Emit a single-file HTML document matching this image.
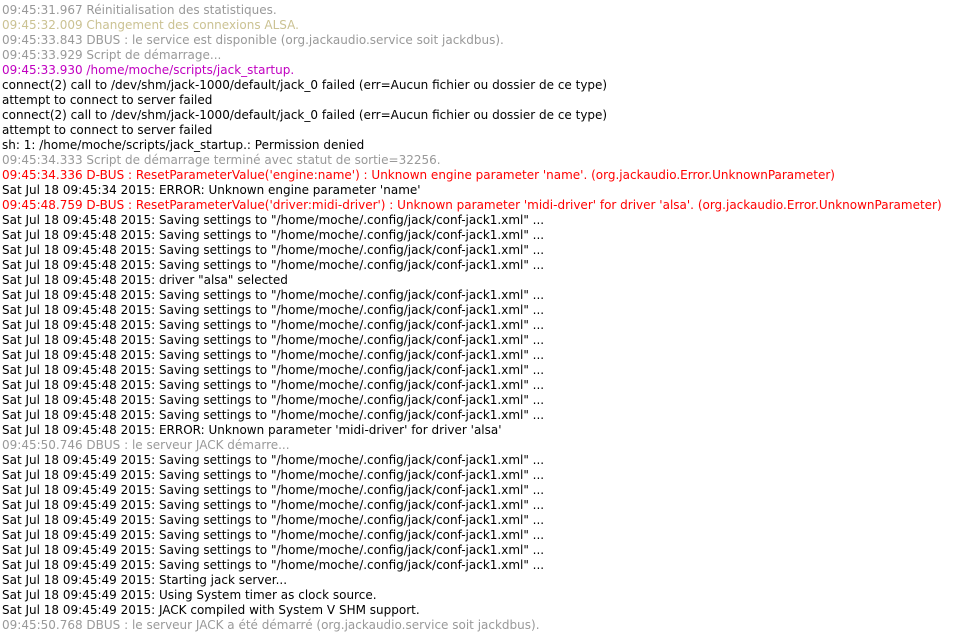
<!DOCTYPE html>
<html><head><meta charset="utf-8"><style>
body{margin:0;background:#fff;width:963px;height:632px;overflow:hidden}
#l{position:absolute;left:2px;top:3px;font-family:"DejaVu Sans",sans-serif;font-size:12px;line-height:15px;color:#000;white-space:pre}
.g{color:#999}.y{color:#cbc293}.p{color:#c000c0}.r{color:#f00}
</style></head><body><div id="l"><div class="g">09:45:31.967 Réinitialisation des statistiques.</div><div class="y">09:45:32.009 Changement des connexions ALSA.</div><div class="g">09:45:33.843 DBUS : le service est disponible (org.jackaudio.service soit jackdbus).</div><div class="g">09:45:33.929 Script de démarrage...</div><div class="p">09:45:33.930 /home/moche/scripts/jack_startup.</div><div>connect(2) call to /dev/shm/jack-1000/default/jack_0 failed (err=Aucun fichier ou dossier de ce type)</div><div>attempt to connect to server failed</div><div>connect(2) call to /dev/shm/jack-1000/default/jack_0 failed (err=Aucun fichier ou dossier de ce type)</div><div>attempt to connect to server failed</div><div>sh: 1: /home/moche/scripts/jack_startup.: Permission denied</div><div class="g">09:45:34.333 Script de démarrage terminé avec statut de sortie=32256.</div><div class="r">09:45:34.336 D-BUS : ResetParameterValue('engine:name') : Unknown engine parameter 'name'. (org.jackaudio.Error.UnknownParameter)</div><div>Sat Jul 18 09:45:34 2015: ERROR: Unknown engine parameter 'name'</div><div class="r">09:45:48.759 D-BUS : ResetParameterValue('driver:midi-driver') : Unknown parameter 'midi-driver' for driver 'alsa'. (org.jackaudio.Error.UnknownParameter)</div><div>Sat Jul 18 09:45:48 2015: Saving settings to "/home/moche/.config/jack/conf-jack1.xml" ...</div><div>Sat Jul 18 09:45:48 2015: Saving settings to "/home/moche/.config/jack/conf-jack1.xml" ...</div><div>Sat Jul 18 09:45:48 2015: Saving settings to "/home/moche/.config/jack/conf-jack1.xml" ...</div><div>Sat Jul 18 09:45:48 2015: Saving settings to "/home/moche/.config/jack/conf-jack1.xml" ...</div><div>Sat Jul 18 09:45:48 2015: driver "alsa" selected</div><div>Sat Jul 18 09:45:48 2015: Saving settings to "/home/moche/.config/jack/conf-jack1.xml" ...</div><div>Sat Jul 18 09:45:48 2015: Saving settings to "/home/moche/.config/jack/conf-jack1.xml" ...</div><div>Sat Jul 18 09:45:48 2015: Saving settings to "/home/moche/.config/jack/conf-jack1.xml" ...</div><div>Sat Jul 18 09:45:48 2015: Saving settings to "/home/moche/.config/jack/conf-jack1.xml" ...</div><div>Sat Jul 18 09:45:48 2015: Saving settings to "/home/moche/.config/jack/conf-jack1.xml" ...</div><div>Sat Jul 18 09:45:48 2015: Saving settings to "/home/moche/.config/jack/conf-jack1.xml" ...</div><div>Sat Jul 18 09:45:48 2015: Saving settings to "/home/moche/.config/jack/conf-jack1.xml" ...</div><div>Sat Jul 18 09:45:48 2015: Saving settings to "/home/moche/.config/jack/conf-jack1.xml" ...</div><div>Sat Jul 18 09:45:48 2015: Saving settings to "/home/moche/.config/jack/conf-jack1.xml" ...</div><div>Sat Jul 18 09:45:48 2015: ERROR: Unknown parameter 'midi-driver' for driver 'alsa'</div><div class="g">09:45:50.746 DBUS : le serveur JACK démarre...</div><div>Sat Jul 18 09:45:49 2015: Saving settings to "/home/moche/.config/jack/conf-jack1.xml" ...</div><div>Sat Jul 18 09:45:49 2015: Saving settings to "/home/moche/.config/jack/conf-jack1.xml" ...</div><div>Sat Jul 18 09:45:49 2015: Saving settings to "/home/moche/.config/jack/conf-jack1.xml" ...</div><div>Sat Jul 18 09:45:49 2015: Saving settings to "/home/moche/.config/jack/conf-jack1.xml" ...</div><div>Sat Jul 18 09:45:49 2015: Saving settings to "/home/moche/.config/jack/conf-jack1.xml" ...</div><div>Sat Jul 18 09:45:49 2015: Saving settings to "/home/moche/.config/jack/conf-jack1.xml" ...</div><div>Sat Jul 18 09:45:49 2015: Saving settings to "/home/moche/.config/jack/conf-jack1.xml" ...</div><div>Sat Jul 18 09:45:49 2015: Saving settings to "/home/moche/.config/jack/conf-jack1.xml" ...</div><div>Sat Jul 18 09:45:49 2015: Starting jack server...</div><div>Sat Jul 18 09:45:49 2015: Using System timer as clock source.</div><div>Sat Jul 18 09:45:49 2015: JACK compiled with System V SHM support.</div><div class="g">09:45:50.768 DBUS : le serveur JACK a été démarré (org.jackaudio.service soit jackdbus).</div></div></body></html>
